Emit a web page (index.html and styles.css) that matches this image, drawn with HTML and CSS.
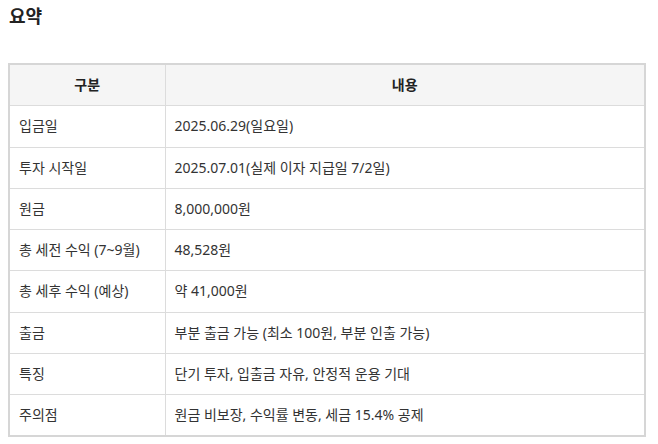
FILE: index.html
```html
<!DOCTYPE html>
<html lang="ko">
<head>
<meta charset="utf-8">
<link rel="stylesheet" href="styles.css">
</head>
<body>
<h2 class="title">요약</h2>
<table class="summary">
  <colgroup><col class="c1"><col class="c2"></colgroup>
  <thead>
    <tr><th>구분</th><th>내용</th></tr>
  </thead>
  <tbody>
    <tr><td>입금일</td><td>2025.06.29(일요일)</td></tr>
    <tr><td>투자 시작일</td><td>2025.07.01(실제 이자 지급일 7/2일)</td></tr>
    <tr><td>원금</td><td>8,000,000원</td></tr>
    <tr><td>총 세전 수익 (7~9월)</td><td>48,528원</td></tr>
    <tr><td>총 세후 수익 (예상)</td><td>약 41,000원</td></tr>
    <tr><td>출금</td><td>부분 출금 가능 (최소 100원, 부분 인출 가능)</td></tr>
    <tr><td>특징</td><td>단기 투자, 입출금 자유, 안정적 운용 기대</td></tr>
    <tr><td>주의점</td><td>원금 비보장, 수익률 변동, 세금 15.4% 공제</td></tr>
  </tbody>
</table>
</body>
</html>
```
FILE: styles.css
```css
html, body { margin: 0; padding: 0; background: #fff; }
body {
  padding: 0 12px 0 8px;
  font-family: "Noto Sans", "Noto Sans CJK KR", sans-serif;
  color: #333;
}
.title {
  margin: 0;
  padding: 3px 0 0 1px;
  height: 63px;
  box-sizing: border-box;
  font-family: "Noto Sans CJK KR", sans-serif;
  font-size: 18px;
  line-height: 24px;
  font-weight: 700;
  color: #222;
}
.summary {
  width: 638px;
  border-collapse: collapse;
  border: 2px solid #d6d6d6;
  font-size: 14px;
}
.c1 { width: 156px; }
.summary th, .summary td {
  border: 1px solid #dcdcdc;
  padding: 10px 9px 10px 9px;
  line-height: 20.25px;
  text-align: left;
  vertical-align: middle;
}
.summary th {
  background: #f5f5f5;
  text-align: center;
  font-weight: 700;
  color: #222;
}
.summary td { color: #333; }
```
